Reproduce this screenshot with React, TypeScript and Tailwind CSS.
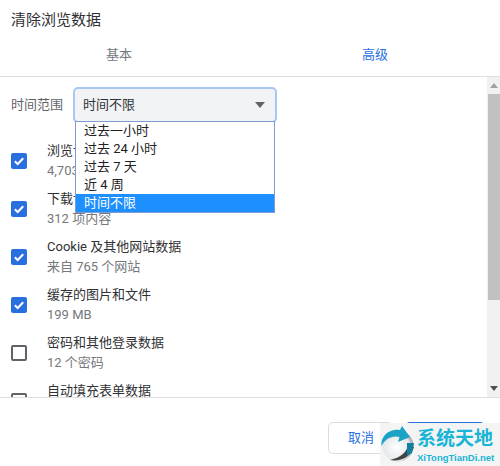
import React from "react";

const rows: [string, string, boolean][] = [
  ["浏览记录", "4,703 项内容", true],
  ["下载记录", "312 项内容", true],
  ["Cookie 及其他网站数据", "来自 765 个网站", true],
  ["缓存的图片和文件", "199 MB", true],
  ["密码和其他登录数据", "12 个密码", false],
  ["自动填充表单数据", "", false],
];
const options = ["过去一小时", "过去 24 小时", "过去 7 天", "近 4 周", "时间不限"];

function Check({ on }: { on: boolean }) {
  if (!on) return <div className="w-4 h-4 shrink-0 rounded-[2px] border-2 border-[#5f6368]" />;
  return (
    <div className="w-4 h-4 shrink-0 rounded-[2px] bg-[#2a6fe0] flex items-center justify-center">
      <svg width="12" height="12" viewBox="0 0 12 12" fill="none">
        <path d="M1.8 6.2 L4.7 9 L10.2 3.2" stroke="#fff" strokeWidth="2" />
      </svg>
    </div>
  );
}

export default function App() {
  return (
    <div className="relative w-[500px] h-[466px] bg-white overflow-hidden flex flex-col font-['Roboto','Noto_Sans_CJK_SC',sans-serif] text-[#202124]">
      <div className="h-[41px] pl-[11px] pt-[10px] text-[15px] leading-[20px] text-[#303134]">清除浏览数据</div>
      <div className="h-[36px] flex pl-[106px] gap-[230px] pt-[5px] text-[13px] leading-[18px] border-b border-[#dfdfdf]">
        <span className="text-[#75787c]">基本</span>
        <span className="text-[#2a6fe0]">高级</span>
      </div>
      <div className="h-[320px] flex overflow-hidden">
        <div className="relative flex-1 overflow-hidden pt-[10px]">
          <div className="flex items-center h-[36px]">
            <span className="ml-[11px] w-[62px] text-[13px] text-[#5f6368]">时间范围</span>
            <div className="w-[204px] h-[36px] rounded-[5px] border-2 border-[#a8c7f5] bg-[#f1f3f4] flex items-center justify-between pl-[8px] pr-[9px]">
              <span className="text-[13px] text-[#303134]">时间不限</span>
              <svg width="12" height="6" viewBox="0 0 12 6"><path d="M1 0H11L6 6Z" fill="#5f6368" /></svg>
            </div>
          </div>
          <div className="flex flex-col mt-[14px] pl-[11px]">
            {rows.map((r) => (
              <div key={r[0]} className="h-[48px] flex items-center gap-[20px] shrink-0">
                <Check on={r[2]} />
                <div className="flex flex-col">
                  <span className="text-[13px] leading-[20px] text-[#303134]">{r[0]}</span>
                  <span className="text-[13px] leading-[20px] text-[#75787c] min-h-[20px]">{r[1]}</span>
                </div>
              </div>
            ))}
          </div>
          <div className="absolute left-[75px] top-[44px] w-[200px] h-[92px] bg-white border border-[#7f9bd0] flex flex-col text-[13px] text-[#202124]">
            {options.map((o, i) => (
              <div key={o} className={`h-[18px] leading-[18px] pl-[8px] ${i === 4 ? "bg-[#1e8fff] text-white" : ""}`}>{o}</div>
            ))}
          </div>
        </div>
        <div className="w-[13px] bg-[#f1f1f1] flex flex-col items-end">
          <div className="h-[17px] w-full flex items-center justify-center">
            <svg width="8" height="5" viewBox="0 0 8 5"><path d="M0 5H8L4 0Z" fill="#a3a3a3" /></svg>
          </div>
          <div className="h-[206px] w-[12px] bg-[#c1c1c1]" />
          <div className="flex-1" />
          <div className="h-[17px] w-full flex items-center justify-center">
            <svg width="8" height="5" viewBox="0 0 8 5"><path d="M0 0H8L4 5Z" fill="#505050" /></svg>
          </div>
        </div>
      </div>
      <div className="flex-1 border-t border-[#dfdfdf] flex justify-end gap-[12px] pt-[24px] pr-[15px]">
        <button className="w-[65px] h-[32px] rounded-[5px] border border-[#dadce0] text-[13px] text-[#2a6fe0] bg-white text-left pl-[19px]">取消</button>
        <button className="w-[80px] h-[32px] rounded-[5px] bg-[#2a6fe0]" />
      </div>
      <div className="absolute left-[380px] top-[423px] w-[120px] h-[43px] bg-[#f4f4f4] flex">
        <svg width="37" height="37" viewBox="0 0 37 37" className="shrink-0 mt-[3px]">
          <defs>
            <radialGradient id="ball" cx="45%" cy="55%" r="60%">
              <stop offset="0%" stopColor="#ffffff" />
              <stop offset="70%" stopColor="#e6e8ea" />
              <stop offset="100%" stopColor="#8f9497" />
            </radialGradient>
          </defs>
          <circle cx="18" cy="20" r="15.5" fill="url(#ball)" />
          <path d="M10 34 C20 36 31 31 34 21 L28 19 C27 27 19 32 10 34Z" fill="#3f4447" />
          <path d="M1.5 20 C0 9 11 2 20 4 L22 0 L30 11 L18 16 L19.5 11 C12 9 5 13 1.5 20Z" fill="#1ba3c6" />
          <path d="M27 17 L34 17 L32 27 L27 30Z" fill="#14809f" />
        </svg>
        <div className="flex flex-col font-['Liberation_Sans','Noto_Sans_CJK_SC',sans-serif]">
          <span className="text-[19px] leading-[22px] mt-[5px] font-bold text-[#19b5d6] whitespace-nowrap">系统天地</span>
          <span className="text-[9.5px] leading-[12px] mt-[2px] font-bold text-[#19b5d6] whitespace-nowrap">XiTongTianDi.net</span>
        </div>
      </div>
    </div>
  );
}
